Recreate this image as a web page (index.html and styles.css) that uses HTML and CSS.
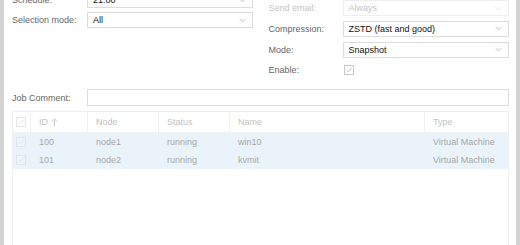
FILE: index.html
```html
<!DOCTYPE html>
<html>
<head>
<meta charset="utf-8">
<link rel="stylesheet" href="styles.css">
</head>
<body>
<div class="window">
  <div class="panel">
    <div class="columns">
      <div class="col col-left">
        <div class="row"><span class="label">Schedule:</span><div class="field combo"><span class="val">21:00</span><svg class="chev" viewBox="0 0 8 5"><path d="M0.5 0.5 L4 4 L7.5 0.5"/></svg></div></div>
        <div class="row"><span class="label">Selection mode:</span><div class="field combo"><span class="val">All</span><svg class="chev" viewBox="0 0 8 5"><path d="M0.5 0.5 L4 4 L7.5 0.5"/></svg></div></div>
      </div>
      <div class="col col-right">
        <div class="row disabled"><span class="label">Send email:</span><div class="field combo"><span class="val">Always</span><svg class="chev" viewBox="0 0 8 5"><path d="M0.5 0.5 L4 4 L7.5 0.5"/></svg></div></div>
        <div class="row"><span class="label">Compression:</span><div class="field combo"><span class="val">ZSTD (fast and good)</span><svg class="chev" viewBox="0 0 8 5"><path d="M0.5 0.5 L4 4 L7.5 0.5"/></svg></div></div>
        <div class="row"><span class="label">Mode:</span><div class="field combo"><span class="val">Snapshot</span><svg class="chev" viewBox="0 0 8 5"><path d="M0.5 0.5 L4 4 L7.5 0.5"/></svg></div></div>
        <div class="row"><span class="label">Enable:</span><span class="check big"><svg viewBox="0 0 10 10"><path d="M2 5 L4.2 7.2 L8.5 2"/></svg></span></div>
      </div>
    </div>
    <div class="row comment-row"><span class="label">Job Comment:</span><div class="field wide"></div></div>
    <div class="grid">
      <div class="grid-head">
        <div class="cell c-check"><span class="check"><svg viewBox="0 0 10 10"><path d="M2 5 L4.2 7.2 L8.5 2"/></svg></span></div>
        <div class="cell c-id">ID <svg class="sort" viewBox="0 0 8 10"><path d="M4 9.5 V1 M1 4 L4 1 L7 4"/></svg></div>
        <div class="cell c-node">Node</div>
        <div class="cell c-status">Status</div>
        <div class="cell c-name">Name</div>
        <div class="cell c-type">Type</div>
      </div>
      <div class="grid-row">
        <div class="cell c-check"><span class="check"><svg viewBox="0 0 10 10"><path d="M2 5 L4.2 7.2 L8.5 2"/></svg></span></div>
        <div class="cell c-id">100</div>
        <div class="cell c-node">node1</div>
        <div class="cell c-status">running</div>
        <div class="cell c-name">win10</div>
        <div class="cell c-type">Virtual Machine</div>
      </div>
      <div class="grid-row">
        <div class="cell c-check"><span class="check"><svg viewBox="0 0 10 10"><path d="M2 5 L4.2 7.2 L8.5 2"/></svg></span></div>
        <div class="cell c-id">101</div>
        <div class="cell c-node">node2</div>
        <div class="cell c-status">running</div>
        <div class="cell c-name">kvmit</div>
        <div class="cell c-type">Virtual Machine</div>
      </div>
    </div>
  </div>
</div>
</body>
</html>
```
FILE: styles.css
```css
html, body {
  margin: 0;
  padding: 0;
  height: 245px;
  overflow: hidden;
  background: #fff;
}
body {
  font-family: "Liberation Sans", Arial, sans-serif;
  font-size: 9px;
  color: #222;
}
.window {
  height: 245px;
  border-left: 4px solid #d3d3d3;
  border-right: 4px solid #d3d3d3;
  background: #fff;
  box-sizing: border-box;
  overflow: hidden;
}
.panel {
  padding: 0 7px 0 8px;
  margin-top: -8px;
}
.columns {
  display: grid;
  grid-template-columns: 1fr 1fr;
  column-gap: 16px;
}
.col {
  display: flex;
  flex-direction: column;
  gap: 4px;
}
.col-right {
  padding-top: 8px;
  gap: 4.75px;
}
.row {
  display: flex;
  align-items: center;
  height: 16px;
}
.label {
  width: 75px;
  flex: none;
  color: #666;
  white-space: nowrap;
}
.col-right .label {
  width: 74px;
}
.field {
  flex: 1;
  height: 16px;
  box-sizing: border-box;
  border: 1px solid #dcdcdc;
  display: flex;
  align-items: center;
  padding: 0 6px 0 5px;
  background: #fff;
}
.val {
  flex: 1;
  color: #111;
  white-space: nowrap;
}
.chev {
  width: 7px;
  height: 5px;
  fill: none;
  stroke: #b8b8b8;
  stroke-width: 1;
}
.disabled .label,
.disabled .val {
  color: #c4c4c4;
}
.disabled .field {
  border-color: #eeeeee;
}
.disabled .chev {
  stroke: #dedede;
}
.check {
  display: inline-flex;
  width: 10px;
  height: 10px;
  box-sizing: border-box;
  border: 1px solid #c8c8c8;
  background: #fff;
}
.check svg {
  width: 8px;
  height: 8px;
  fill: none;
  stroke: #b0b0b0;
  stroke-width: 1;
}
.check.big {
  margin-left: 1px;
}
.comment-row {
  margin-top: 10.75px;
  height: 17px;
}
.comment-row .field {
  height: 17px;
}
.grid {
  margin-top: 5px;
  border: 1px solid #eeeeee;
  border-right-color: #f0f0f0;
  height: 160px;
  color: #a8a8a8;
}
.grid-head {
  display: flex;
  height: 20px;
  border-bottom: 1px solid #f0f0f0;
  color: #c2c2c2;
}
.grid-row {
  display: flex;
  height: 18px;
  background: #eaf2fa;
}
.cell {
  display: flex;
  align-items: center;
  padding-left: 8px;
  box-sizing: border-box;
  white-space: nowrap;
}
.grid-head .cell {
  border-right: 1px solid #f0f0f0;
}
.grid-head .cell:last-child {
  border-right: none;
}
.c-check { width: 18px; padding-left: 3px; }
.c-id { width: 57px; }
.c-node { width: 71px; }
.c-status { width: 71px; }
.c-name { width: 195px; }
.c-type { flex: 1; }
.grid .check {
  border-color: #e4e4e4;
}
.grid .check svg {
  stroke: #e0e0e0;
}
.grid-row .check {
  border-color: #dfe6ee;
  background: #eef4fb;
}
.grid-row .check svg {
  stroke: #d8e0e8;
}
.sort {
  width: 7px;
  height: 9px;
  margin-left: 3px;
  fill: none;
  stroke: #c2c2c2;
  stroke-width: 1;
}
```
